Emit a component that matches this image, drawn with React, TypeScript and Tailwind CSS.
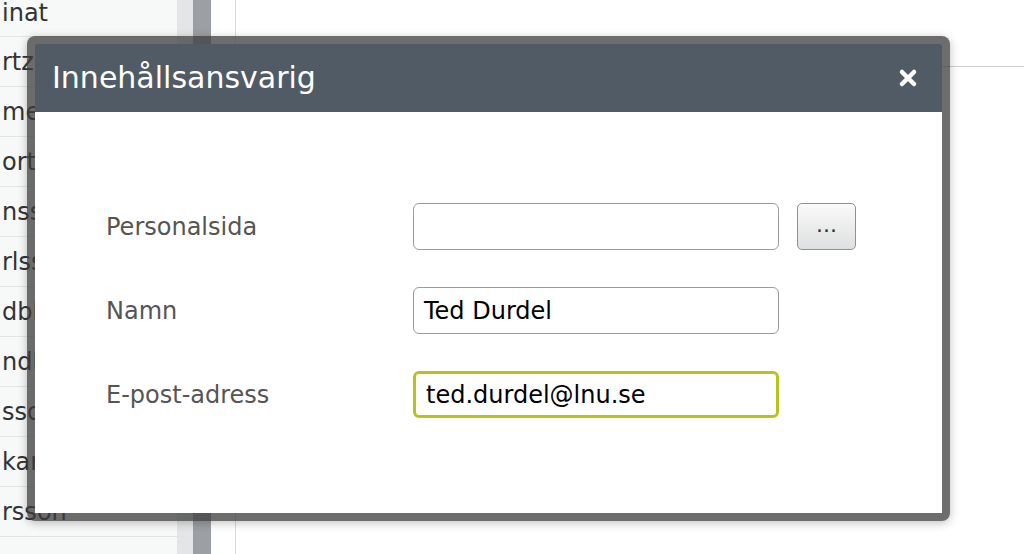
import { X } from 'lucide-react'

const rows = ['rtz', 'mer', 'ortl', 'nss', 'rlss', 'dbl', 'ndh', 'sso', 'kar', 'rsson', '']

function Background() {
  return (
    <div className="flex h-[554px] w-[1024px] overflow-hidden bg-white">
      <div className="w-[177px] shrink-0 overflow-hidden bg-[#f7f8f8] text-[24px] text-[#333]">
        <div className="flex h-[37px] items-center border-b border-[#e2e4e5] pb-[11px] pl-[2px]">inat</div>
        {rows.map((r, i) => (
          <div key={i} className="flex h-[50px] items-center border-b border-[#e2e4e5] pl-[2px]">
            {r}
          </div>
        ))}
      </div>
      <div className="w-[16px] shrink-0 bg-[#e4e5e6]" />
      <div className="w-[18px] shrink-0 bg-[#9c9fa3]" />
      <div className="w-[24px] shrink-0 bg-white" />
      <div className="flex-1 border-l border-[#dcdcdc]">
        <div className="h-[67px] border-b border-[#cfcfcf]" />
      </div>
    </div>
  )
}

function Field({ label, value, focused, extra }: { label: string; value: string; focused?: boolean; extra?: boolean }) {
  return (
    <div className="flex items-center">
      <div className="w-[307px] text-[24px] text-[#555]">{label}</div>
      <div
        className={`flex h-[47px] w-[366px] items-center rounded-[6px] bg-white px-[10px] text-[24px] text-black ${
          focused ? 'border-[3px] border-[#b6c41a] px-[8px]' : 'border border-[#979ca2]'
        }`}
      >
        {value}
      </div>
      {extra && (
        <button
          type="button"
          className="ml-[18px] flex h-[47px] w-[59px] items-center justify-center rounded-[5px] border border-[#8d9196] bg-gradient-to-b from-[#fafafa] to-[#dedfe0] pb-[4px] text-[22px] text-[#333]"
        >
          ...
        </button>
      )}
    </div>
  )
}

export default function App() {
  return (
    <div className="relative h-[554px] w-[1024px] overflow-hidden" style={{ fontFamily: '"DejaVu Sans", Verdana, sans-serif' }}>
      <Background />
      <div className="absolute left-[27px] top-[36px] flex h-[485px] w-[923px] flex-col rounded-[8px] bg-[rgba(60,60,60,0.75)] p-[8px] shadow-[0_2px_10px_rgba(0,0,0,0.25)]">
        <div className="flex h-[68px] shrink-0 items-center justify-between rounded-t-[3px] bg-[#505b65] pl-[17px] pr-[22px]">
          <h1 className="text-[30px] leading-none text-white">Innehållsansvarig</h1>
          <X size={24} strokeWidth={4.5} className="text-white" />
        </div>
        <div className="flex flex-1 flex-col gap-[37px] bg-white pl-[71px] pt-[91px]">
          <Field label="Personalsida" value="" extra />
          <Field label="Namn" value="Ted Durdel" />
          <Field label="E-post-adress" value="ted.durdel@lnu.se" focused />
        </div>
      </div>
    </div>
  )
}
